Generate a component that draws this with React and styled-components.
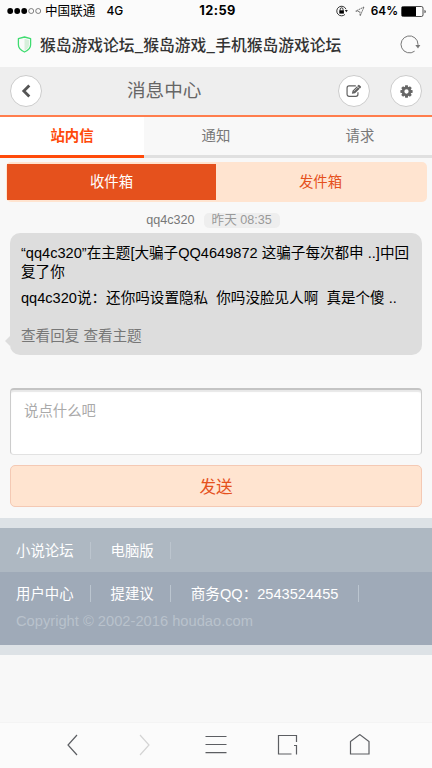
import React, { useState } from "react";
import styled, { createGlobalStyle } from "styled-components";

const TABS = ["站内信", "通知", "请求"];
const BOXES = ["收件箱", "发件箱"];

export default function App() {
  const [tab, setTab] = useState(0);
  const [box, setBox] = useState(0);

  return (
    <Page>
      <GlobalStyle />

      <StatusBar>
        <Carrier>
          <SignalIcon />
          <span>中国联通</span>
          <Network>4G</Network>
        </Carrier>
        <Clock>12:59</Clock>
        <Battery>
          <LockIcon />
          <LocationIcon />
          <Percent>64%</Percent>
          <BatteryIcon />
        </Battery>
      </StatusBar>

      <AddressBar>
        <ShieldIcon />
        <PageTitle>猴岛游戏论坛_猴岛游戏_手机猴岛游戏论坛</PageTitle>
        <ReloadIcon />
      </AddressBar>

      <Header>
        <RoundButton aria-label="返回">
          <BackIcon />
        </RoundButton>
        <HeaderTitle>消息中心</HeaderTitle>
        <HeaderActions>
          <RoundButton aria-label="编辑">
            <EditIcon />
          </RoundButton>
          <RoundButton aria-label="设置">
            <GearIcon />
          </RoundButton>
        </HeaderActions>
      </Header>

      <Tabs>
        {TABS.map((name, i) => (
          <Tab key={name} $active={tab === i} onClick={() => setTab(i)}>
            {name}
          </Tab>
        ))}
      </Tabs>

      <Segment>
        {BOXES.map((name, i) => (
          <SegmentItem key={name} $active={box === i} onClick={() => setBox(i)}>
            {name}
          </SegmentItem>
        ))}
      </Segment>

      <Meta>
        <span>qq4c320</span>
        <Time>昨天 08:35</Time>
      </Meta>

      <Bubble>
        <Message>“qq4c320”在主题[大骗子QQ4649872 这骗子每次都申 ..]中回复了你</Message>
        <Message>qq4c320说：还你吗设置隐私&nbsp; 你吗没脸见人啊&nbsp; 真是个傻 ..</Message>
        <Links>
          <span>查看回复</span> <span>查看主题</span>
        </Links>
      </Bubble>

      <ReplyInput placeholder="说点什么吧" />
      <SendButton>发送</SendButton>

      <Footer>
        <FooterTop>
          <FooterLink>小说论坛</FooterLink>
          <FooterLink>电脑版</FooterLink>
        </FooterTop>
        <FooterBottom>
          <FooterRow>
            <FooterLink $bright>用户中心</FooterLink>
            <FooterLink $bright>提建议</FooterLink>
            <FooterLink $bright $wide>
              商务QQ：2543524455
            </FooterLink>
          </FooterRow>
          <Copyright>Copyright © 2002-2016 houdao.com</Copyright>
        </FooterBottom>
      </Footer>

      <BottomBar>
        <NavIcon>
          <path d="M17 1 8 11l9 10" />
        </NavIcon>
        <NavIcon $disabled>
          <path d="m8 1 9 10-9 10" />
        </NavIcon>
        <NavIcon>
          <path d="M1.5 2.5h21M1.5 10.5h21M1.5 18.7h21" />
        </NavIcon>
        <NavIcon>
          <path d="M15.5 20H2.5V1.5H20.5V8M18 11.5H20.5V20.5" />
        </NavIcon>
        <NavIcon>
          <path d="M2.5 7.5 11.8 .6l9.2 6.9V20H2.5z" />
        </NavIcon>
      </BottomBar>
    </Page>
  );
}

const SignalIcon = () => (
  <svg width="36" height="8" viewBox="0 0 36 8">
    {[3.2, 10.2, 17.2].map((x) => (
      <circle key={x} cx={x} cy="4" r="2.9" fill="#000" />
    ))}
    {[24.2, 31.2].map((x) => (
      <circle key={x} cx={x} cy="4" r="2.5" fill="none" stroke="#333" strokeWidth=".6" />
    ))}
  </svg>
);

const LockIcon = () => (
  <svg width="12" height="12" viewBox="0 0 12 12" fill="none" stroke="#222">
    <path d="M9 9.4A4.8 4.8 0 1 1 10 4.2" strokeWidth=".9" />
    <path d="M8.8 5h3L10.4 7.2z" fill="#222" stroke="none" />
    <path d="M4.2 5.6V4.2a1.4 1.4 0 0 1 2.8 0v1.4" strokeWidth=".9" />
    <path d="M3.3 5.3h4.6v3.3H3.3z" fill="#000" stroke="none" />
  </svg>
);

const LocationIcon = () => (
  <svg width="10" height="11" viewBox="0 0 10 11" fill="none" stroke="#444" strokeWidth=".8">
    <path d="M9 1 .8 5.1 4.8 5.5 5.2 9.8z" strokeDasharray="1.6 .6" />
  </svg>
);

const BatteryIcon = () => (
  <svg width="25" height="11" viewBox="0 0 25 11">
    <rect x=".5" y=".5" width="21.5" height="10" rx="1.6" fill="#fff" stroke="#222" strokeWidth=".8" />
    <path d="M1 1h14v9H1z" />
    <path d="M23.6 3.7c1.3.5 1.3 3.1 0 3.6z" />
  </svg>
);

const ShieldIcon = () => (
  <svg width="15" height="17" viewBox="0 0 15 17">
    <path d="M7.5 2.8 12 4v5c0 2.5-2 4.4-4.5 5.5z" fill="#d7efdb" />
    <path
      d="M7.5 1 13.6 2.7v6.1c0 3.3-2.8 5.8-6.1 7.2-3.3-1.4-6.1-3.9-6.1-7.2V2.7z"
      fill="none"
      stroke="#3fdc70"
      strokeWidth="1.3"
      strokeLinejoin="round"
    />
  </svg>
);

const ReloadIcon = () => (
  <svg width="21" height="19" viewBox="0 0 21 19">
    <path d="M14.6 16.2A8.5 8.5 0 1 1 18 9.5v1.8" fill="none" stroke="#777" />
    <path d="M15.3 9.9h5.1L18 13.6z" fill="#777" />
  </svg>
);

const BackIcon = () => (
  <svg width="14" height="14" viewBox="0 0 14 14" fill="none" stroke="#555" strokeWidth="2.8">
    <path d="M10.3 1.4 4.8 7l5.5 5.6" />
  </svg>
);

const EditIcon = () => (
  <svg width="16" height="14" viewBox="0 0 15 13" fill="none" stroke="#606060">
    <path d="M9.2 1.7H2.9A1.9 1.9 0 0 0 1 3.6v6A1.9 1.9 0 0 0 2.9 11.5h6.4a1.9 1.9 0 0 0 1.9-1.9V7.7" strokeWidth="1.1" />
    <path d="m5.5 9 .6-2.8 5.2-5.1a1 1 0 0 1 1.4 0l1.1 1a1 1 0 0 1 0 1.4L8.5 8.7z" fill="#606060" stroke="none" />
    <path d="m7.3 6.8 4.1-4M10.4 1.9 13 4.4" stroke="#eee" strokeWidth=".6" />
  </svg>
);

const GearIcon = () => (
  <svg width="13" height="13" viewBox="0 0 14 14">
    <circle cx="7" cy="7" r="3.7" fill="none" stroke="#666" strokeWidth="2.8" />
    {[0, 45, 90, 135, 180, 225, 270, 315].map((deg) => (
      <path key={deg} d="M5.6.4h2.8l.5 2.6H5.1z" fill="#666" transform={`rotate(${deg} 7 7)`} />
    ))}
  </svg>
);

const GlobalStyle = createGlobalStyle`
  * {
    box-sizing: border-box;
  }

  body {
    margin: 0;
    background: #f8f8f8;
  }

  button,
  textarea {
    font: inherit;
  }

  svg {
    display: block;
    flex: none;
  }
`;

const Page = styled.div`
  display: flex;
  flex-direction: column;
  width: 432px;
  height: 768px;
  overflow: hidden;
  background: #f8f8f8;
  color: #000;
  font-family: "Liberation Sans", "Noto Sans CJK SC", sans-serif;
  font-size: 14.4px;
`;

const StatusBar = styled.div`
  display: grid;
  grid-template-columns: 1fr auto 1fr;
  align-items: center;
  height: 22px;
  padding: 0 6px 0 7px;
  background: #fbfbfb;
  font-family: Inter, "Noto Sans CJK SC", sans-serif;
  font-size: 12.6px;
  line-height: 22px;
`;

const Carrier = styled.div`
  display: flex;
  align-items: center;
  gap: 2px;
`;

const Network = styled.span`
  margin-left: 9px;
  font-size: 12px;
  font-weight: 500;
`;

const Clock = styled.div`
  padding-left: 2px;
  font-size: 12.8px;
  font-weight: 700;
  letter-spacing: 0.4px;
`;

const Battery = styled.div`
  display: flex;
  align-items: center;
  justify-content: flex-end;

  svg:first-child {
    margin-right: 7px;
  }
`;

const Percent = styled.span`
  margin: 0 3px 0 6px;
  font-size: 11.8px;
  font-weight: 600;
`;

const AddressBar = styled.div`
  display: flex;
  align-items: center;
  height: 45px;
  padding: 0 11px 0 17px;
  background: #fbfbfb;

  svg:last-child {
    margin-left: auto;
  }
`;

const PageTitle = styled.div`
  margin-left: 8px;
  color: #333;
  font-size: 15.75px;
  font-weight: 500;
  font-family: "Noto Sans CJK SC", sans-serif;
  line-height: 22px;
  white-space: nowrap;
`;

const Header = styled.div`
  display: flex;
  align-items: center;
  height: 48px;
  padding: 0 10px;
  background: #eee;
`;

const HeaderTitle = styled.div`
  margin-left: 85px;
  color: #666;
  font-size: 18.6px;
  line-height: 26px;
`;

const HeaderActions = styled.div`
  display: flex;
  gap: 20px;
  margin-left: auto;
`;

const RoundButton = styled.button`
  display: flex;
  align-items: center;
  justify-content: center;
  width: 32px;
  height: 32px;
  padding: 0;
  border: 1px solid #ccc;
  border-radius: 50%;
  background: #fff;
`;

const Tabs = styled.div`
  display: grid;
  grid-template-columns: repeat(3, 1fr);
  height: 42px;
  border-top: 2px solid #ff7d4d;
`;

const Tab = styled.div`
  border-bottom: 3px solid ${(p) => (p.$active ? "#ff4a0a" : "#e0e0e0")};
  background: ${(p) => (p.$active ? "#fff" : "#f8f8f8")};
  color: ${(p) => (p.$active ? "#ff4a0a" : "#777")};
  font-weight: ${(p) => (p.$active ? 700 : 400)};
  line-height: 38px;
  text-align: center;
`;

const Segment = styled.div`
  display: grid;
  grid-template-columns: 209px 1fr;
  height: 40px;
  margin: 5px 5px 0 6px;
  padding: 2px 2px 2px 1px;
  border-radius: 5px;
  background: #ffe4d0;
`;

const SegmentItem = styled.div`
  background: ${(p) => (p.$active ? "#e5511d" : "transparent")};
  color: ${(p) => (p.$active ? "#fff" : "#e5511d")};
  line-height: 36px;
  text-align: center;
`;

const Meta = styled.div`
  display: flex;
  align-items: center;
  justify-content: center;
  gap: 9px;
  height: 15px;
  margin: 11px 6px 0 0;
  color: #777;
  font-size: 12.6px;
  line-height: 15px;
`;

const Time = styled.span`
  padding: 0 8px;
  border-radius: 5px;
  background: #eee;
  color: #999;
`;

const Bubble = styled.div`
  position: relative;
  height: 122px;
  margin: 5px 10px 0;
  padding: 11px 10px 0 11px;
  border-radius: 10px;
  background: #ddd;
  font-size: 14.58px;

  /* tail */
  &::before {
    content: "";
    position: absolute;
    left: -5px;
    top: 103px;
    border: 5px solid transparent;
    border-left: 0;
    border-right-color: #ddd;
  }
`;

const Message = styled.p`
  margin: 0 0 7px;
  line-height: 19px;
`;

const Links = styled.div`
  margin-top: 18px;
  color: #777;
  line-height: 20px;
`;

const ReplyInput = styled.textarea`
  height: 67px;
  margin: 33px 10px 0;
  padding: 12px 13px;
  border: 1px solid #ccc;
  border-top: 2px solid #c4c4c4;
  border-bottom-color: #e2e2e2;
  border-radius: 4px;
  background: #fff;
  box-shadow: inset 0 2px 1px #e8e8e8;
  line-height: 19px;
  outline: none;
  resize: none;

  &::placeholder {
    color: #aaa;
    opacity: 1;
  }
`;

const SendButton = styled.button`
  height: 42px;
  margin: 10px 10px 0;
  padding: 0;
  border: 1px solid #f4c9b4;
  border-radius: 5px;
  background: #ffe4d0;
  color: #e5511d;
  font-size: 16.6px;
`;

const Footer = styled.div`
  margin-top: 11px;
  border: solid #dde2e6;
  border-width: 10px 0;
`;

const FooterTop = styled.div`
  display: flex;
  height: 44px;
  padding: 14px 16px;
  background: #aeb8c2;
`;

const FooterBottom = styled.div`
  height: 73px;
  padding: 13px 16px 0;
  background: #9faab8;
`;

const FooterRow = styled.div`
  display: flex;
`;

const FooterLink = styled.span`
  height: 17px;
  margin-right: 19.5px;
  padding-right: ${(p) => (p.$wide ? 19.5 : 16.5)}px;
  border-right: 1px solid ${(p) => (p.$bright ? "#bbc5cf" : "#bcc5ce")};
  color: #fff;
  font-size: ${(p) => (p.$wide ? 14.6 : 14.4)}px;
  line-height: 18px;
`;

const Copyright = styled.div`
  margin-top: 10px;
  color: #b9c2cc;
  font-size: 14.7px;
  line-height: 18px;
`;

const BottomBar = styled.div`
  display: flex;
  justify-content: space-between;
  height: 46px;
  margin-top: auto;
  padding: 11px 60px 0;
  border-top: 1px solid #f4f4f4;
  background: #fbfbfb;
`;

const NavIcon = styled.svg.attrs({ width: 24, height: 24, viewBox: "0 0 24 24" })`
  fill: none;
  stroke: ${(p) => (p.$disabled ? "#d4d4d4" : "#5c5e62")};
  stroke-width: 1.2;
`;
